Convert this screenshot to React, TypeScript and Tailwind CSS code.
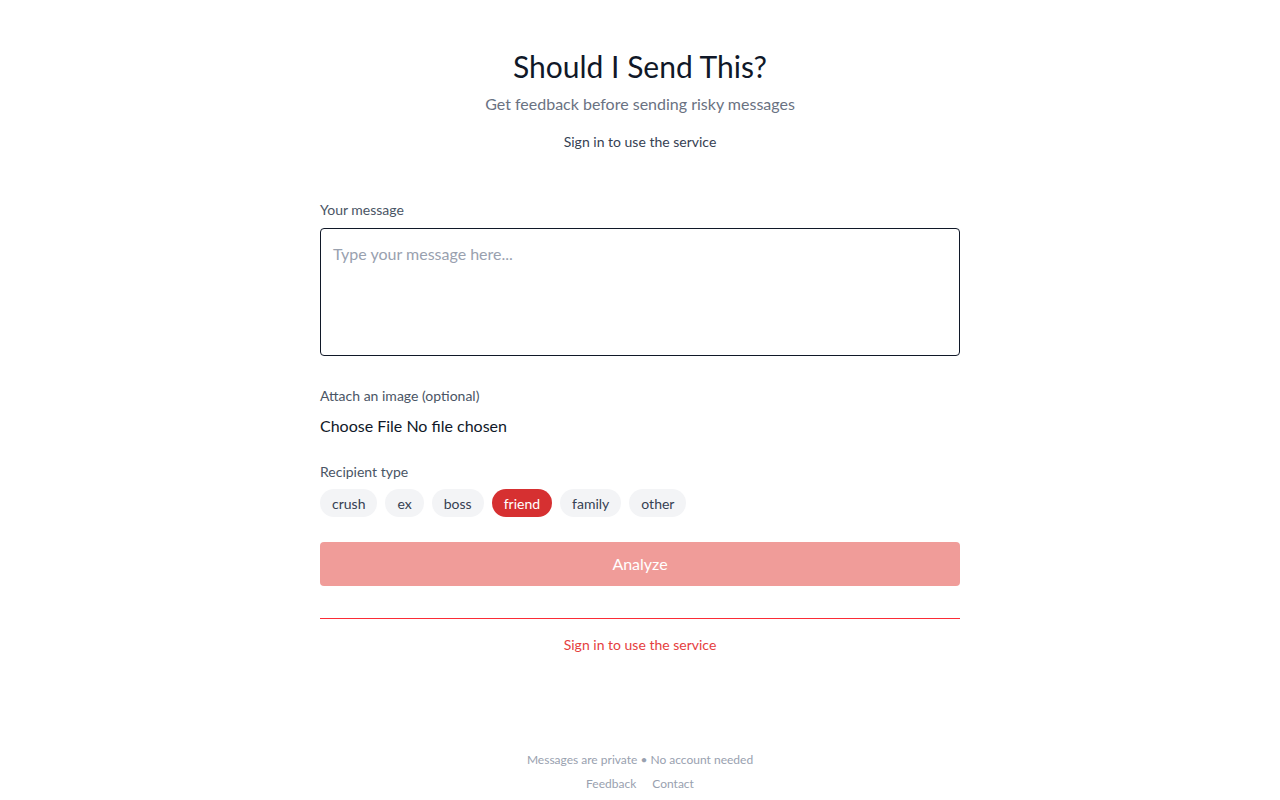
import { useState } from "react";

const recipients = ["crush", "ex", "boss", "friend", "family", "other"];

export default function App() {
  const [recipient, setRecipient] = useState("friend");
  const [message, setMessage] = useState("");

  return (
    <div className="flex min-h-screen flex-col bg-white font-['Lato',sans-serif] text-gray-900">
      <main className="mx-auto w-full max-w-[640px] flex-1">
        <header className="pt-[46px] text-center">
          <h1 className="text-[30px] leading-[40px] font-normal text-gray-900">Should I Send This?</h1>
          <p className="mt-[8px] text-[16px] leading-[20px] text-gray-500">
            Get feedback before sending risky messages
          </p>
          <p className="mt-[18px] text-[14px] leading-[20px] text-gray-700">Sign in to use the service</p>
        </header>

        <form className="mt-[48px]" onSubmit={(e) => e.preventDefault()}>
          <label htmlFor="message" className="block text-[14px] leading-[20px] text-gray-600">
            Your message
          </label>
          <textarea
            id="message"
            value={message}
            onChange={(e) => setMessage(e.target.value)}
            placeholder="Type your message here..."
            className="mt-2 block h-[128px] w-full resize-none rounded border border-gray-900 px-3 py-[14px] text-[16px] leading-[22px] placeholder:text-gray-400 focus:outline-none"
          />

          <label className="mt-[30px] block text-[14px] leading-[20px] text-gray-600">
            Attach an image (optional)
          </label>
          <div className="mt-[10px] text-[16px] leading-[20px] text-gray-900">Choose File No file chosen</div>

          <label className="mt-[26px] block text-[14px] leading-[20px] text-gray-600">Recipient type</label>
          <div className="mt-[7px] flex gap-2">
            {recipients.map((r) => (
              <button
                key={r}
                type="button"
                onClick={() => setRecipient(r)}
                className={
                  r === recipient
                    ? "h-7 rounded-full bg-[#d63031] px-3 text-[14px] text-white"
                    : "h-7 rounded-full bg-gray-100 px-3 text-[14px] text-gray-700"
                }
              >
                {r}
              </button>
            ))}
          </div>

          <button
            type="submit"
            disabled
            className="mt-[25px] h-11 w-full rounded bg-[#f09c99] text-[16px] text-white"
          >
            Analyze
          </button>
        </form>

        <div className="mt-8 border-t border-red-500 pt-4 text-center">
          <p className="text-[14px] leading-[20px] text-[#e53e3e]">Sign in to use the service</p>
        </div>
      </main>

      <footer className="pb-[8px] text-center text-[12px] leading-[16px] text-gray-400">
        <p>Messages are private • No account needed</p>
        <div className="mt-2 flex justify-center gap-4">
          <a href="#">Feedback</a>
          <a href="#">Contact</a>
        </div>
      </footer>
    </div>
  );
}
